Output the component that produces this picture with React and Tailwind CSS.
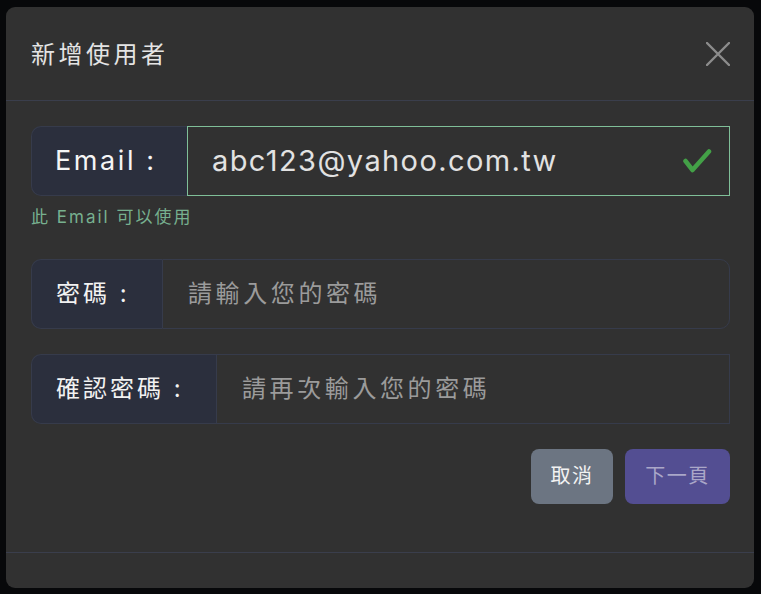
const font = { fontFamily: 'Inter, "Noto Sans CJK TC", sans-serif' };

function FieldRow({ label, labelWidth, placeholder, roundedInput }) {
  return (
    <div className="flex h-[70px]">
      <div
        className={`flex items-center pl-[24px] ${labelWidth} shrink-0 rounded-l-[10px] border border-r-0 border-[#363b4b] bg-[#2b2f3d] text-[24px] tracking-[3px] text-[#f2f2f2]`}
      >
        {label}
      </div>
      <div
        className={`flex flex-1 items-center border border-[#363b4b] pl-[25px] text-[24px] tracking-[3.6px] text-[#9b9b9b] ${roundedInput ? 'rounded-r-[10px]' : ''}`}
      >
        {placeholder}
      </div>
    </div>
  );
}

export default function App() {
  return (
    <div className="min-h-[594px] bg-[#07080a] pl-[6px] pt-[7px]" style={font}>
      <div className="flex h-[581px] w-[748px] flex-col rounded-[9px] bg-[#313131]">
        {/* header */}
        <div className="flex h-[94px] items-center justify-between border-b border-[#3a3e4c] pl-[25px] pr-[24px]">
          <h2 className="pt-[2px] text-[24px] tracking-[3.5px] text-[#e4e4e4]">新增使用者</h2>
          <svg width="24" height="24" viewBox="0 0 24 24" className="text-[#8c8c8c]">
            <path d="M1 1 23 23M23 1 1 23" stroke="currentColor" strokeWidth="2.4" strokeLinecap="round" fill="none" />
          </svg>
        </div>

        {/* body */}
        <div className="flex flex-1 flex-col pl-[25px] pr-[24px] pt-[25px]">
          <div className="flex h-[70px]">
            <div className="flex w-[156px] shrink-0 items-center rounded-l-[10px] border border-r-0 border-[#363b4b] bg-[#2b2f3d] pl-[23px] text-[27px] tracking-[2.6px] text-[#f5f5f5]">
              Email :
            </div>
            <div className="flex flex-1 items-center justify-between border border-[#7fbf98] pl-[24px] pr-[17px] text-[29px] tracking-[1.4px] text-[#e2e2e2]">
              <span>abc123@yahoo.com.tw</span>
              <svg width="30" height="26" viewBox="0 0 30 26" className="text-[#43a047]">
                <path d="M3.5 13 10.5 22 27 3.5" stroke="currentColor" strokeWidth="4.5" strokeLinecap="round" strokeLinejoin="round" fill="none" />
              </svg>
            </div>
          </div>
          <p className="mt-[9px] text-[17px] tracking-[2px] text-[#77b08f]">此 Email 可以使用</p>

          <div className="mt-[28px] flex flex-col gap-[25px]">
            <FieldRow label="密碼 :" labelWidth="w-[131px]" placeholder="請輸入您的密碼" roundedInput />
            <FieldRow label="確認密碼 :" labelWidth="w-[185px]" placeholder="請再次輸入您的密碼" />
          </div>

          <div className="mt-[25px] flex justify-end gap-[12px]">
            <button className="h-[55px] w-[82px] rounded-[8px] bg-[#6c7582] text-[20px] tracking-[1.5px] text-[#f2f2f2]">取消</button>
            <button className="h-[55px] w-[105px] rounded-[8px] bg-[#534e92] text-[20px] tracking-[1.5px] text-[#aaa7c8]">下一頁</button>
          </div>
        </div>

        {/* footer */}
        <div className="h-[36px] border-t border-[#3a3e4c]" />
      </div>
    </div>
  );
}
